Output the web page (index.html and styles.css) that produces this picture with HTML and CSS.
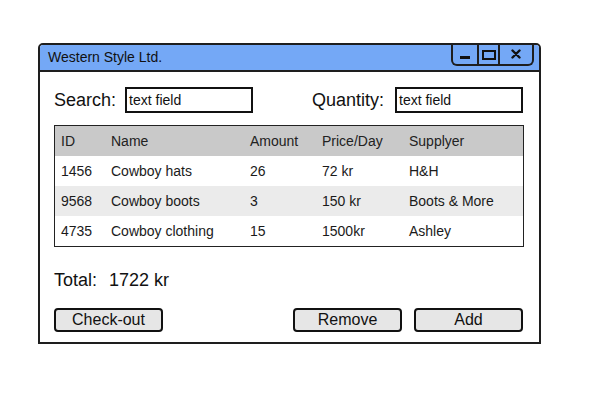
FILE: index.html
```html
<!DOCTYPE html>
<html>
<head>
<meta charset="utf-8">
<link rel="stylesheet" href="styles.css">
</head>
<body>
<div class="window">
  <div class="titlebar">
    <span class="title">Western Style Ltd.</span>
    <div class="controls">
      <div class="ctl ctl-min"><span class="min-bar"></span></div>
      <div class="ctl ctl-max"><span class="max-box"></span></div>
      <div class="ctl ctl-close">
        <svg width="10" height="10" viewBox="0 0 10 10"><path d="M1.5 1.5 L8.5 8.5 M8.5 1.5 L1.5 8.5" stroke="#111" stroke-width="2.4" stroke-linecap="round"/></svg>
      </div>
    </div>
  </div>
  <div class="content">
    <div class="search-row">
      <div class="field">
        <span class="label">Search:</span>
        <div class="input">text field</div>
      </div>
      <div class="field">
        <span class="label">Quantity:</span>
        <div class="input">text field</div>
      </div>
    </div>
    <div class="table">
      <div class="row head"><span>ID</span><span>Name</span><span>Amount</span><span>Price/Day</span><span>Supplyer</span></div>
      <div class="row"><span>1456</span><span>Cowboy hats</span><span>26</span><span>72 kr</span><span>H&amp;H</span></div>
      <div class="row alt"><span>9568</span><span>Cowboy boots</span><span>3</span><span>150 kr</span><span>Boots &amp; More</span></div>
      <div class="row"><span>4735</span><span>Cowboy clothing</span><span>15</span><span>1500kr</span><span>Ashley</span></div>
    </div>
    <div class="total"><span>Total:</span><span class="total-val">1722 kr</span></div>
    <div class="buttons">
      <div class="btn">Check-out</div>
      <div class="right-btns">
        <div class="btn">Remove</div>
        <div class="btn">Add</div>
      </div>
    </div>
  </div>
</div>
</body>
</html>
```
FILE: styles.css
```css
html, body {
  margin: 0;
  padding: 0;
  background: #fff;
}
body {
  padding: 43px 0 0 38px;
  font-family: "Liberation Sans", Arial, sans-serif;
  color: #111;
}
.window {
  width: 503px;
  height: 301px;
  box-sizing: border-box;
  border: 2px solid #1e1e1e;
  border-radius: 5px 5px 0 0;
  display: flex;
  flex-direction: column;
}
.titlebar {
  height: 25px;
  background: #74a8f6;
  border-bottom: 2px solid #1e1e1e;
  border-radius: 3px 3px 0 0;
  display: flex;
  align-items: flex-start;
  justify-content: space-between;
  padding-left: 8px;
  padding-right: 5px;
}
.title {
  font-size: 14px;
  line-height: 25px;
}
.controls {
  display: flex;
  height: 21px;
  width: 83px;
  box-sizing: border-box;
  border: 2px solid #1e1e1e;
  border-top: none;
  border-radius: 0 0 6px 6px;
}
.ctl {
  display: flex;
  align-items: center;
  justify-content: center;
}
.ctl-min { width: 24px; border-right: 2px solid #1e1e1e; }
.ctl-max { width: 19px; border-right: 2px solid #1e1e1e; }
.ctl-close { flex: 1; }
.min-bar {
  width: 10px;
  height: 3px;
  background: #111;
  margin-top: 6px;
}
.max-box {
  width: 10px;
  height: 6px;
  border: 2px solid #111;
  box-sizing: content-box;
  margin-top: 1px;
}
.ctl-close svg { margin-top: -1px; }
.content {
  flex: 1;
  padding: 15px 16px 0 14px;
  display: flex;
  flex-direction: column;
}
.search-row {
  display: flex;
  justify-content: space-between;
}
.field {
  display: flex;
  align-items: center;
}
.label {
  font-size: 18px;
  margin-right: 9px;
}
.field + .field .label { margin-right: 11px; }
.input {
  width: 128px;
  height: 26px;
  box-sizing: border-box;
  border: 2px solid #111;
  font-size: 14px;
  line-height: 22px;
  padding-left: 2px;
}
.table {
  margin-top: 12px;
  border: 1px solid #222;
  width: 470px;
  box-sizing: border-box;
}
.row {
  display: grid;
  grid-template-columns: 50px 139px 72px 87px 1fr;
  height: 30px;
  align-items: center;
  font-size: 14px;
  color: #1a1a1a;
}
.row span { padding-left: 6px; }
.head { background: #c9c9c9; color: #222; }
.alt { background: #ebebeb; }
.total {
  margin-top: 22px;
  font-size: 18px;
  display: flex;
  gap: 12px;
  height: 22px;
  align-items: center;
}
.buttons {
  margin-top: 17px;
  display: flex;
  justify-content: space-between;
}
.right-btns {
  display: flex;
  gap: 12px;
}
.btn {
  width: 109px;
  height: 24px;
  box-sizing: border-box;
  border: 2px solid #111;
  border-radius: 4px;
  background: #e6e6e6;
  font-size: 16px;
  line-height: 19px;
  text-align: center;
}
```
